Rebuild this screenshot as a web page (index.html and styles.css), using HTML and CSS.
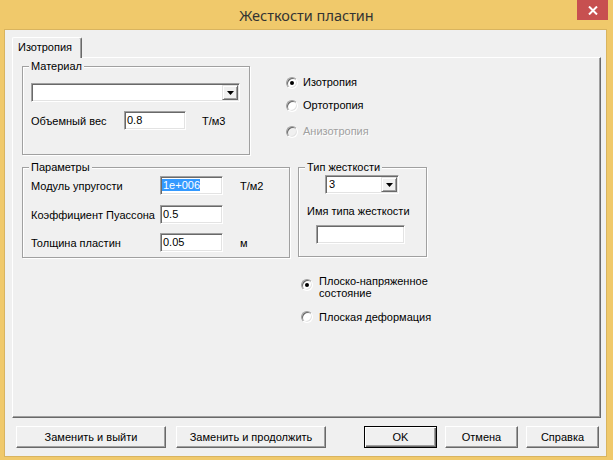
FILE: index.html
```html
<!DOCTYPE html>
<html lang="ru">
<head>
<meta charset="utf-8">
<title>Жесткости пластин</title>
<link rel="stylesheet" href="styles.css">
</head>
<body>
<div class="window">
  <div class="titlebar">
    <div class="title">Жесткости пластин</div>
    <div class="close"><svg width="10" height="9" viewBox="0 0 10 9"><path d="M1 0.5 L9 8.5 M9 0.5 L1 8.5" stroke="#fff" stroke-width="2" fill="none"/></svg></div>
  </div>
  <div class="client">
    <div class="tabs"><div class="tab">Изотропия</div></div>
    <div class="pane">
      <div class="row1">
        <div class="group g-material">
          <div class="gtitle">Материал</div>
          <div class="combo c-material"><div class="combo-text"></div><div class="drop"><svg width="7" height="4" viewBox="0 0 7 4"><path d="M0 0 H7 L3.5 4 Z" fill="#000"/></svg></div></div>
          <div class="frow">
            <span class="lbl l-weight">Объемный вес</span>
            <div class="edit e-weight">0.8</div>
            <span class="unit u-weight">Т/м3</span>
          </div>
        </div>
        <div class="radios r-top">
          <div class="rrow"><span class="radio checked"></span><span>Изотропия</span></div>
          <div class="rrow"><span class="radio"></span><span>Ортотропия</span></div>
          <div class="rrow rrow-last disabled"><span class="radio off"></span><span>Анизотропия</span></div>
        </div>
      </div>
      <div class="row2">
        <div class="group g-params">
          <div class="gtitle">Параметры</div>
          <div class="prow p1">
            <span class="lbl l-param">Модуль упругости</span>
            <div class="edit e-param"><span class="sel">1e+006</span></div>
            <span class="unit u-param">Т/м2</span>
          </div>
          <div class="prow p2">
            <span class="lbl l-param">Коэффициент Пуассона</span>
            <div class="edit e-param">0.5</div>
          </div>
          <div class="prow p3">
            <span class="lbl l-param">Толщина пластин</span>
            <div class="edit e-param">0.05</div>
            <span class="unit u-param">м</span>
          </div>
        </div>
        <div class="rightcol">
          <div class="group g-type">
            <div class="gtitle">Тип жесткости</div>
            <div class="combo c-type"><div class="combo-text">3</div><div class="drop"><svg width="7" height="4" viewBox="0 0 7 4"><path d="M0 0 H7 L3.5 4 Z" fill="#000"/></svg></div></div>
            <div class="tlabel">Имя типа жесткости</div>
            <div class="edit e-type"></div>
          </div>
          <div class="radios r-bottom">
            <div class="brow"><span class="radio checked"></span><span class="btext">Плоско-напряженное<br>состояние</span></div>
            <div class="brow brow2"><span class="radio"></span><span class="btext">Плоская деформация</span></div>
          </div>
        </div>
      </div>
    </div>
    <div class="buttons">
      <div class="btn b-wide">Заменить и выйти</div>
      <div class="btn b-wide b-second">Заменить и продолжить</div>
      <div class="btn b-small b-ok">OK</div>
      <div class="btn b-small b-next">Отмена</div>
      <div class="btn b-small b-next">Справка</div>
    </div>
  </div>
</div>
</body>
</html>
```
FILE: styles.css
```css
* { box-sizing: border-box; }
html, body { margin: 0; padding: 0; }
body {
  background: #F0C96B;
  font-family: "Liberation Sans", Arial, sans-serif;
  font-size: 11px;
  color: #000;
}
.window {
  width: 613px;
  height: 460px;
  display: flex;
  flex-direction: column;
}
.titlebar {
  height: 29px;
  display: grid;
  grid-template-columns: 1fr auto 1fr;
  align-items: start;
}
.title {
  grid-column: 2;
  font-family: "Noto Sans", "Open Sans", sans-serif;
  font-size: 14.5px;
  line-height: 30px;
  color: #333;
}
.close {
  grid-column: 3;
  justify-self: end;
  width: 31px;
  height: 20px;
  margin-right: 5px;
  background: #C75050;
  display: flex;
  align-items: center;
  justify-content: center;
}
.client {
  margin-left: 4px;
  width: 603px;
  height: 428px;
  border: 1px solid #D9B45F;
  background: #F0F0F0;
}
.tabs {
  display: flex;
  padding: 7px 0 0 7px;
}
.tab {
  position: relative;
  z-index: 1;
  width: 70px;
  height: 21px;
  background: #F0F0F0;
  border-top: 1px solid #fff;
  border-left: 1px solid #fff;
  border-right: 1px solid #696969;
  box-shadow: inset -1px 0 #a0a0a0;
  border-radius: 2px 2px 0 0;
  padding-left: 5px;
  line-height: 19px;
}
.pane {
  margin: -1px 0 0 7px;
  width: 589px;
  height: 361px;
  border: 1px solid;
  border-color: #fff #696969 #696969 #fff;
  box-shadow: inset -1px -1px #a0a0a0;
  padding: 8px 0 0 9px;
}
.row1, .row2 { display: flex; align-items: flex-start; }
.row2 { margin-top: 12px; }

.group {
  border: 1px solid #a0a0a0;
  box-shadow: inset 1px 1px #fff, 1px 1px #fff;
}
.gtitle {
  width: fit-content;
  margin: -7px 0 0 6px;
  padding: 0 2px;
  background: #F0F0F0;
  line-height: 13px;
}
.g-material { width: 228px; height: 89px; }
.g-params { width: 268px; height: 91px; }
.g-type { width: 129px; height: 90px; }

.combo {
  display: flex;
  height: 19px;
  border: 1px solid;
  border-color: #a0a0a0 #fff #fff #a0a0a0;
  box-shadow: inset 1px 1px #696969, inset -1px -1px #e3e3e3;
  background: #fff;
  padding: 1px;
}
.combo-text { flex: 1; padding-left: 2px; line-height: 15px; }
.drop {
  width: 16px;
  height: 15px;
  background: #F0F0F0;
  border: 1px solid;
  border-color: #e3e3e3 #696969 #696969 #e3e3e3;
  box-shadow: inset 1px 1px #fff, inset -1px -1px #a0a0a0;
  display: flex;
  align-items: center;
  justify-content: center;
}
.c-material { width: 209px; margin: 10px 0 0 8px; }
.c-type { width: 74px; margin: 1px 0 0 26px; }

.edit {
  height: 19px;
  border: 1px solid;
  border-color: #a0a0a0 #fff #fff #a0a0a0;
  box-shadow: inset 1px 1px #696969, inset -1px -1px #e3e3e3;
  background: #fff;
  padding-left: 2px;
  line-height: 17px;
  white-space: nowrap;
}
.sel {
  background: #3399FF;
  color: #fff;
  margin-left: -1px;
  padding-left: 1px;
}

.frow, .prow {
  display: flex;
  align-items: center;
  height: 19px;
  margin-left: 8px;
}
.frow { margin-top: 9px; }
.l-weight { width: 93px; }
.e-weight { width: 62px; }
.u-weight { margin-left: 16px; }
.l-param { width: 129px; }
.e-param { width: 63px; }
.u-param { margin-left: 17px; }
.p1 { margin-top: 2px; }
.p2 { margin-top: 10px; }
.p3 { margin-top: 9px; }

.tlabel { margin: 11px 0 0 8px; line-height: 13px; }
.e-type { width: 89px; margin: 7px 0 0 17px; }

.radio {
  flex: none;
  width: 12px;
  height: 12px;
  border-radius: 50%;
  border: 1px solid;
  border-color: #a0a0a0 #fff #fff #a0a0a0;
  box-shadow: inset 1px 1px #696969, inset -1px -1px #e3e3e3;
  background: #fff;
  display: flex;
  align-items: center;
  justify-content: center;
}
.radio.checked::after {
  content: "";
  width: 4px;
  height: 4px;
  border-radius: 50%;
  background: #000;
}
.radio.off { background: #F0F0F0; }

.r-top { margin: 10px 0 0 36px; }
.rrow {
  display: flex;
  align-items: center;
  height: 13px;
  line-height: 13px;
  margin-top: 10px;
}
.rrow:first-child { margin-top: 0; }
.rrow .radio { margin-right: 5px; }
.rrow-last { margin-top: 13px; }
.disabled { color: #A0A0A0; text-shadow: 1px 1px 0 #fff; }

.rightcol { margin-left: 8px; }
.r-bottom { margin-top: 18px; }
.brow {
  display: flex;
  align-items: flex-start;
  line-height: 12px;
}
.brow .radio { margin: 4px 6px 0 3px; }
.brow2 { margin-top: 12px; }
.brow2 .radio { margin-top: 0; }

.buttons {
  display: flex;
  margin: 8px 0 0 11px;
}
.btn {
  height: 22px;
  background: #F0F0F0;
  border: 1px solid;
  border-color: #fff #696969 #696969 #fff;
  box-shadow: inset -1px -1px #a0a0a0;
  display: flex;
  align-items: center;
  justify-content: center;
}
.b-wide { width: 150px; }
.b-second { margin-left: 10px; }
.b-small { width: 73px; }
.b-ok {
  margin-left: 38px;
  border-color: #000;
  box-shadow: inset 1px 1px #fff, inset -1px -1px #696969, inset -2px -2px #a0a0a0;
}
.b-next { margin-left: 8px; }
```
